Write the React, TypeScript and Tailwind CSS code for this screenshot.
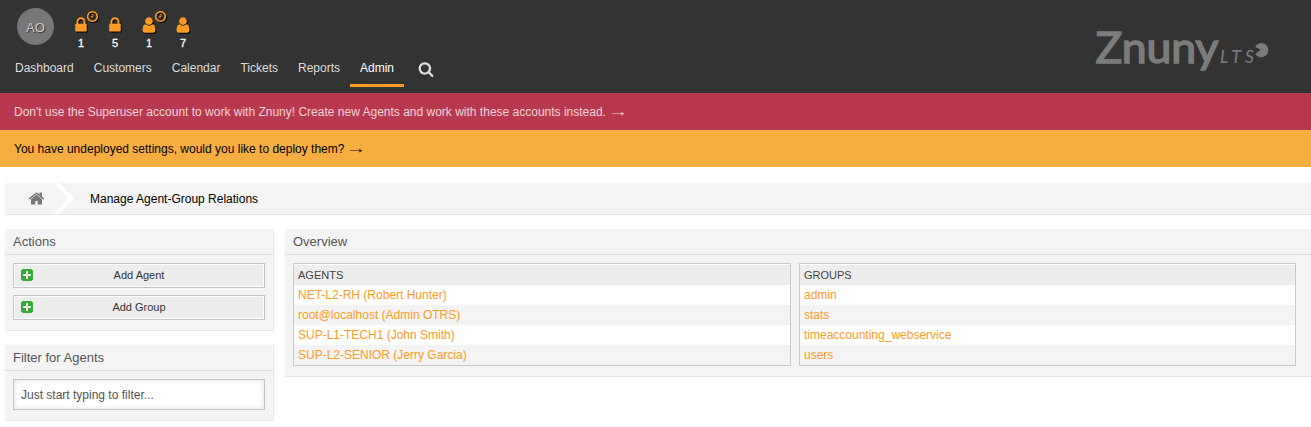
import React from "react";

const LOCK =
  "M640 768h512v-192q0-106-75-181t-181-75-181 75-75 181v192zm832 96v576q0 40-28 68t-68 28h-960q-40 0-68-28t-28-68v-576q0-40 28-68t68-28h32v-192q0-184 132-316t316-132 316 132 132 316v192h32q40 0 68 28t28 68z";
const USER =
  "M1536 1399q0 109-62.5 187t-150.5 78h-854q-88 0-150.5-78t-62.5-187q0-85 8.5-160.5t31.5-152 58.5-131 94-89 134.5-34.5q131 128 313 128t313-128q76 0 134.5 34.5t94 89 58.5 131 31.5 152 8.5 160.5zm-256-887q0 159-112.5 271.5t-271.5 112.5-271.5-112.5-112.5-271.5 112.5-271.5 271.5-112.5 271.5 112.5 112.5 271.5z";
const CLOCK =
  "M1024 544v448q0 14-9 23t-23 9h-320q-14 0-23-9t-9-23v-64q0-14 9-23t23-9h224v-352q0-14 9-23t23-9h64q14 0 23 9t9 23zm416 352q0-148-73-273t-198-198-273-73-273 73-198 198-73 273 73 273 198 198 273 73 273-73 198-198 73-273zm224 0q0 209-103 385.5t-279.5 279.5-385.5 103-385.5-103-279.5-279.5-103-385.5 103-385.5 279.5-279.5 385.5-103 385.5 103 279.5 279.5 103 385.5z";
const SEARCH =
  "M1216 832q0-185-131.5-316.5t-316.5-131.5-316.5 131.5-131.5 316.5 131.5 316.5 316.5 131.5 316.5-131.5 131.5-316.5zm512 832q0 52-38 90t-90 38q-54 0-90-38l-343-342q-179 124-399 124-143 0-273.5-55.5t-225-150-150-225-55.5-273.5 55.5-273.5 150-225 225-150 273.5-55.5 273.5 55.5 225 150 150 225 55.5 273.5q0 220-124 399l343 343q37 37 37 90z";
const HOME =
  "M1472 992v480q0 26-19 45t-45 19h-384v-384h-256v384h-384q-26 0-45-19t-19-45v-480q0-1 .5-3t.5-3l575-474 575 474q1 2 1 6zm223-69l-62 74q-8 9-21 11h-3q-13 0-21-7l-692-577-692 577q-12 8-24 7-13-2-21-11l-62-74q-8-10-7-23.5t11-21.5l719-599q32-26 76-26t76 26l244 204v-195q0-14 9-23t23-9h192q14 0 23 9t9 23v408l219 182q10 8 11 21.5t-7 23.5z";
const PLUS =
  "M1408 960v-128q0-26-19-45t-45-19h-320v-320q0-26-19-45t-45-19h-128q-26 0-45 19t-19 45v320h-320q-26 0-45 19t-19 45v128q0 26 19 45t45 19h320v320q0 26 19 45t45 19h128q26 0 45-19t19-45v-320h320q26 0 45-19t19-45zm256-544v960q0 119-84.5 203.5t-203.5 84.5h-960q-119 0-203.5-84.5t-84.5-203.5v-960q0-119 84.5-203.5t203.5-84.5h960q119 0 203.5 84.5t84.5 203.5z";

function Icon({ d, className }: { d: string; className: string }) {
  return (
    <svg viewBox="0 0 1792 1792" fill="currentColor" className={className}>
      <path d={d} />
    </svg>
  );
}

const counters = [
  { icon: LOCK, count: 1, reminder: true },
  { icon: LOCK, count: 5, reminder: false },
  { icon: USER, count: 1, reminder: true },
  { icon: USER, count: 7, reminder: false },
];

const nav = ["Dashboard", "Customers", "Calendar", "Tickets", "Reports"];

function Header() {
  return (
    <header className="flex h-[93px] justify-between bg-[#333]">
      <div>
        <div className="flex h-[54px] pl-[17px] pt-2">
          <div className="flex size-[37px] items-center justify-center rounded-full bg-[#777] pt-0.5 text-[13px] text-[#ccc] [text-shadow:1px_1px_1px_#333]">
            AO
          </div>
          <div className="flex pl-[10px] pt-2">
            {counters.map((c, i) => (
              <div key={i} className="relative w-[34px] text-center text-[11px] leading-[13px] text-white">
                <Icon d={c.icon} className="mx-auto size-[18px] text-[#ff9b23] drop-shadow-[1px_1px_0_#000]" />
                <div className="pt-[3px] [-webkit-text-stroke:0.3px_#fff]">{c.count}</div>
                {c.reminder && (
                  <Icon d={CLOCK} className="absolute -top-[6px] left-[22px] size-[13px] text-[#ff9b23] drop-shadow-[1px_1px_0_#000]" />
                )}
              </div>
            ))}
          </div>
        </div>
        <nav className="flex pl-[15px] text-[#ddd]">
          {nav.map((n) => (
            <a key={n} className="mr-5 leading-7">
              {n}
            </a>
          ))}
          <a className="-ml-[10px] h-[33px] border-b-[3px] border-[#ff9b23] px-[10px] leading-7 text-white">Admin</a>
          <Icon d={SEARCH} className="ml-[14px] mt-[7px] size-4" />
        </nav>
      </div>
      <svg
        viewBox="0 0 180 93"
        className="mr-[39px] h-[93px] w-[180px] font-[Lato,sans-serif]"
        fill="#7c7c7c"
        stroke="#7c7c7c"
      >
        <text x="3.5" y="63" fontSize="42" strokeWidth="1.5" textLength="123" lengthAdjust="spacingAndGlyphs">
          Znuny
        </text>
        <text x="128" y="63" fontSize="17.5" fontStyle="italic" strokeWidth="0.1" textLength="34" lengthAdjust="spacing">
          LTS
        </text>
        <path stroke="none" d="M168.5 49.7 L163 46.7 A7.1 7.1 0 1 1 163.3 54 Z" />
      </svg>
    </header>
  );
}

function Widget({ title, className = "", children }: { title: string; className?: string; children: React.ReactNode }) {
  return (
    <section className={`border-b border-r border-[#e6e6e6] bg-[#f4f4f4] ${className}`}>
      <h2 className="h-[26px] border-b border-[#ddd] pl-2 text-[13px] leading-[25px] text-[#555]">{title}</h2>
      {children}
    </section>
  );
}

function ActionButton({ label }: { label: string }) {
  return (
    <button className="flex h-[25px] items-center border border-[#c4c4c4] bg-[#ededed] pl-[6px] pr-[7px] text-[11px] text-[#333] shadow-[inset_0_0_0_1px_#fff]">
      <Icon d={PLUS} className="mb-px size-[14px] text-[#35a836]" />
      <span className="flex-1 pr-[13px] text-center">{label}</span>
    </button>
  );
}

function ListTable({ title, rows, className }: { title: string; rows: string[]; className: string }) {
  return (
    <div className={`h-[103px] border border-[#c8c8c8] bg-white pt-px ${className}`}>
      <div className="h-5 bg-[#ededed] pl-1 text-[11px] leading-5 text-[#444]">{title}</div>
      {rows.map((r) => (
        <div key={r} className="h-5 pl-1 leading-5 text-[#ff9b23] odd:bg-[#f4f4f4] even:bg-white">
          {r}
        </div>
      ))}
    </div>
  );
}

function Notice({ text, className }: { text: string; className: string }) {
  return (
    <div className={`flex h-[37px] pl-[14px] pt-px leading-[37px] ${className}`}>
      <span>{text}</span>
      <span className="inline-block origin-left scale-x-[1.5] pl-px text-[14px] leading-[34px]">→</span>
    </div>
  );
}

export default function App() {
  return (
    <div className="h-[427px] overflow-hidden bg-white font-['Liberation_Sans',Arial,sans-serif] text-[12px]">
      <Header />
      <Notice
        text="Don't use the Superuser account to work with Znuny! Create new Agents and work with these accounts instead."
        className="bg-[#b8394e] text-[#f3d3d8]"
      />
      <Notice text="You have undeployed settings, would you like to deploy them?" className="bg-[#f7ae40] text-black" />
      <div className="ml-[5px] mt-4 flex h-8 border-b border-[#e6e6e6] bg-[#f4f4f4] leading-[32px]">
        <Icon d={HOME} className="ml-[23px] mt-[7px] size-[17px] text-[#777]" />
        <svg viewBox="0 0 22 31" className="ml-[9px] h-[31px] w-[22px]" fill="none" stroke="#fff" strokeWidth="4">
          <path d="M1.5 -1 L17.5 15.5 L1.5 32" />
        </svg>
        <span className="pl-[14px] text-black">Manage Agent-Group Relations</span>
      </div>
      <main className="ml-[5px] mt-[14px] flex items-start gap-[11px]">
        <div className="flex w-[269px] shrink-0 flex-col gap-[14px]">
          <Widget title="Actions" className="h-[102px]">
            <div className="flex flex-col gap-[7px] px-2 pt-2">
              <ActionButton label="Add Agent" />
              <ActionButton label="Add Group" />
            </div>
          </Widget>
          <Widget title="Filter for Agents" className="h-[76px]">
            <div className="px-2 pt-2">
              <input
                placeholder="Just start typing to filter..."
                className="block h-[31px] w-full border border-[#c4c4c4] bg-white px-[7px] shadow-[inset_0_0_5px_#ddd] placeholder:text-[#555]"
              />
            </div>
          </Widget>
        </div>
        <Widget title="Overview" className="h-[148px] flex-1 border-r-0">
          <div className="flex gap-2 pl-2 pr-[15px] pt-2">
            <ListTable
              title="AGENTS"
              className="w-[498px]"
              rows={["NET-L2-RH (Robert Hunter)", "root@localhost (Admin OTRS)", "SUP-L1-TECH1 (John Smith)", "SUP-L2-SENIOR (Jerry Garcia)"]}
            />
            <ListTable title="GROUPS" className="flex-1" rows={["admin", "stats", "timeaccounting_webservice", "users"]} />
          </div>
        </Widget>
      </main>
    </div>
  );
}
